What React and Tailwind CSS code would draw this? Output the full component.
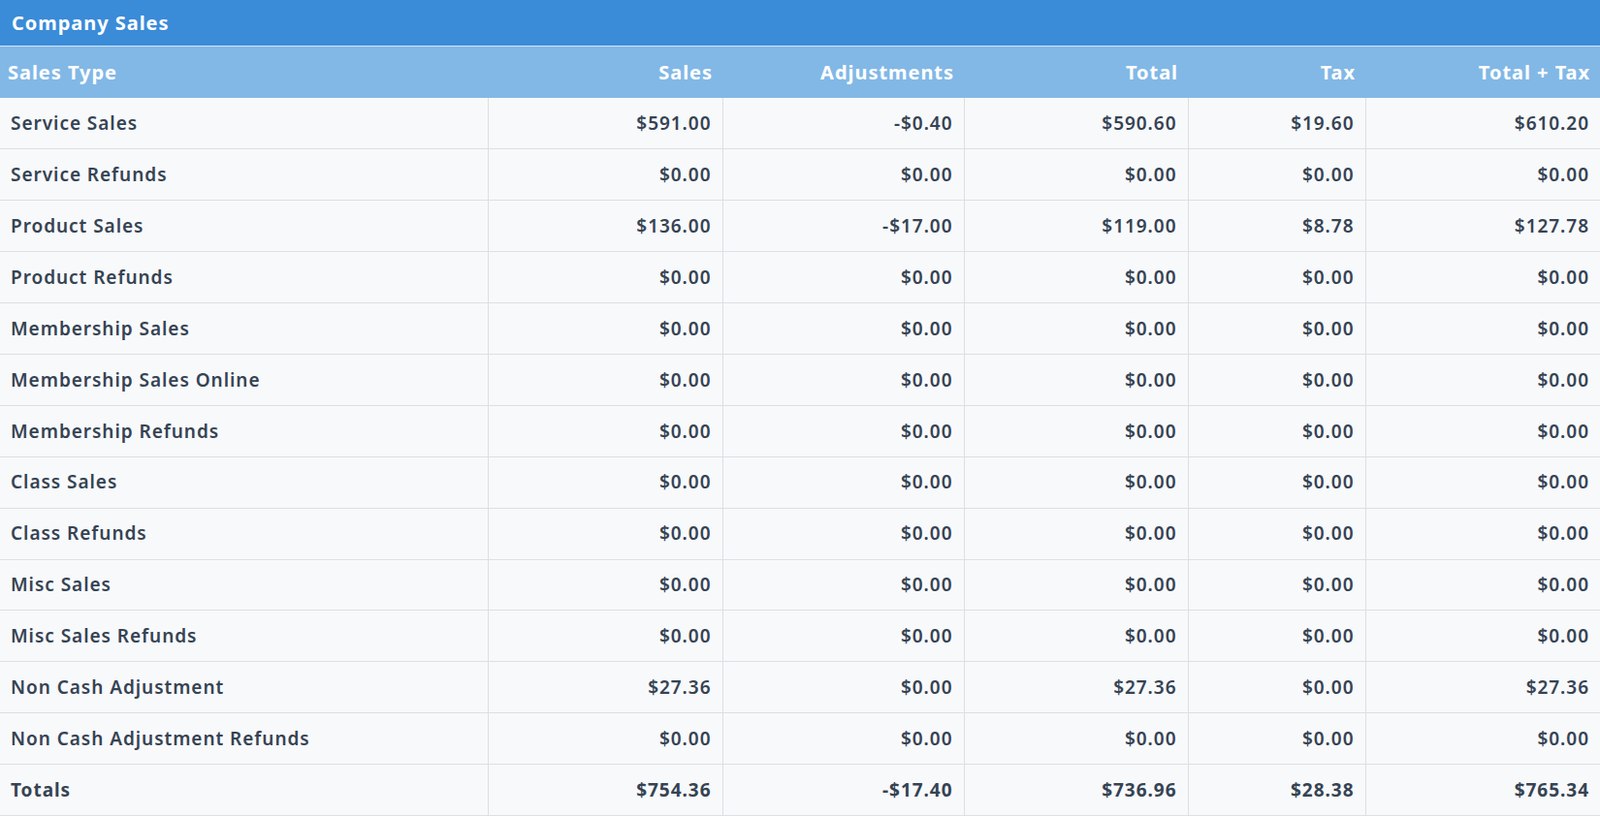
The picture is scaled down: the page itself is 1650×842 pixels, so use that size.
const rows = [
  ["Service Sales", "$591.00", "-$0.40", "$590.60", "$19.60", "$610.20"],
  ["Service Refunds", "$0.00", "$0.00", "$0.00", "$0.00", "$0.00"],
  ["Product Sales", "$136.00", "-$17.00", "$119.00", "$8.78", "$127.78"],
  ["Product Refunds", "$0.00", "$0.00", "$0.00", "$0.00", "$0.00"],
  ["Membership Sales", "$0.00", "$0.00", "$0.00", "$0.00", "$0.00"],
  ["Membership Sales Online", "$0.00", "$0.00", "$0.00", "$0.00", "$0.00"],
  ["Membership Refunds", "$0.00", "$0.00", "$0.00", "$0.00", "$0.00"],
  ["Class Sales", "$0.00", "$0.00", "$0.00", "$0.00", "$0.00"],
  ["Class Refunds", "$0.00", "$0.00", "$0.00", "$0.00", "$0.00"],
  ["Misc Sales", "$0.00", "$0.00", "$0.00", "$0.00", "$0.00"],
  ["Misc Sales Refunds", "$0.00", "$0.00", "$0.00", "$0.00", "$0.00"],
  ["Non Cash Adjustment", "$27.36", "$0.00", "$27.36", "$0.00", "$27.36"],
  ["Non Cash Adjustment Refunds", "$0.00", "$0.00", "$0.00", "$0.00", "$0.00"],
]

const totals = ["Totals", "$754.36", "-$17.40", "$736.96", "$28.38", "$765.34"]
const heads = ["Sales Type", "Sales", "Adjustments", "Total", "Tax", "Total + Tax"]
const widths = ["w-[503px]", "w-[242px]", "w-[249px]", "w-[231px]", "w-[183px]", "w-[242px]"]

const App = () => {
  return (
    <div className="w-[1650px] h-[842px] bg-[#f8f9fb] text-[#354353] font-['Lato',sans-serif] tracking-[0.06em]">
      <div className="h-[48px] bg-[#3a8bd8] text-white font-bold text-[20px] flex items-center px-[12px] border-b border-[#d6e4f2]">
        Company Sales
      </div>
      <table className="w-full border-collapse table-fixed">
        <thead>
          <tr className="h-[53px] bg-[#82b8e6] text-white text-[20px] font-bold">
            {heads.map((h, i) => (
              <th key={i} className={`${widths[i]} px-[10px] ${i === 0 ? "text-left pl-[8px]" : "text-right"}`}>{h}</th>
            ))}
          </tr>
        </thead>
        <tbody>
          {[...rows, totals].map((r, ri) => (
            <tr key={ri} className={`h-[52.9px] text-[19px] ${ri === rows.length ? "font-bold" : "font-semibold"}`}>
              {r.map((c, ci) => (
                <td key={ci} className={`border border-[#dcdfe3] border-t-0 first:border-l-0 last:border-r-0 px-[11px] ${ci === 0 ? "text-left" : "text-right"}`}>{c}</td>
              ))}
            </tr>
          ))}
        </tbody>
      </table>
    </div>
  )
}

export default App
